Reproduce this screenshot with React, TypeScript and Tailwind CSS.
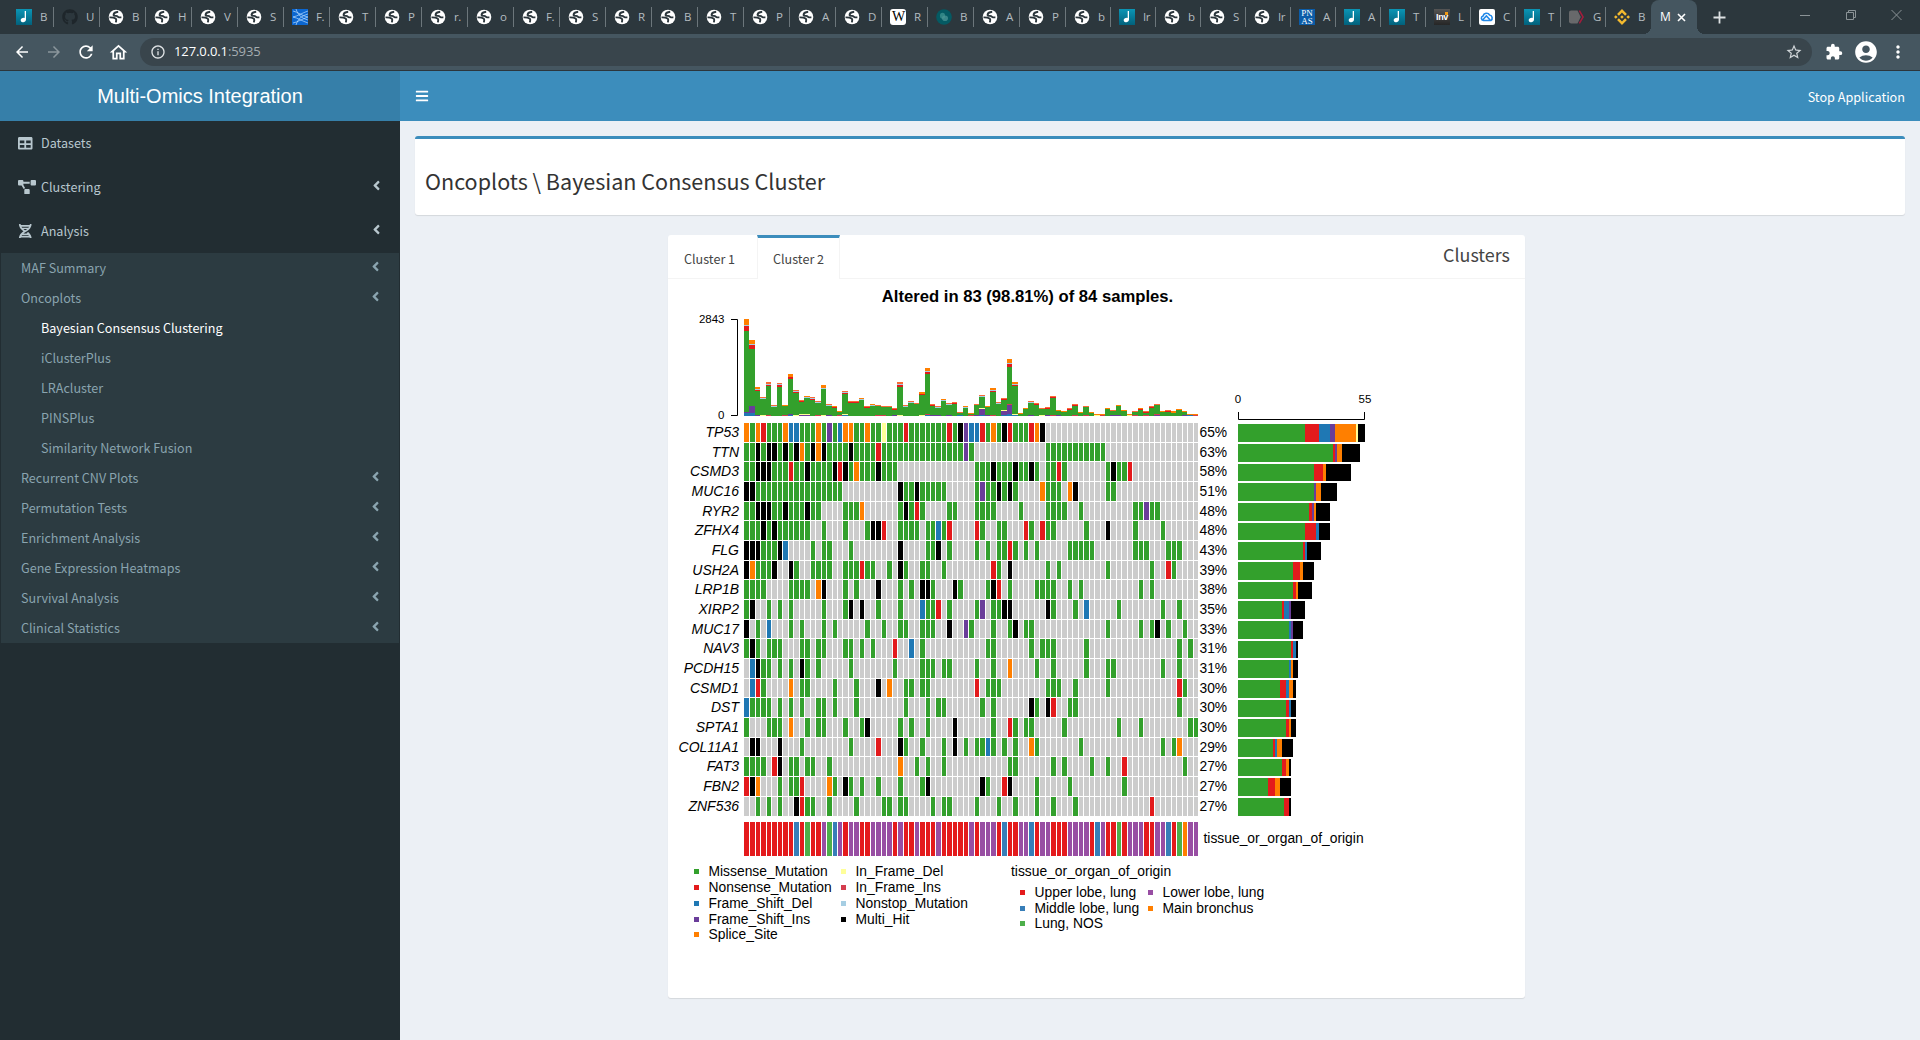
import React from "react";
import { FaAngleLeft, FaBars, FaDna, FaGithub, FaProjectDiagram, FaTable } from "react-icons/fa";
import { SiBinance } from "react-icons/si";
import {
  MdAccountCircle,
  MdArrowBack,
  MdArrowForward,
  MdExtension,
  MdInfoOutline,
  MdMoreVert,
  MdOutlineHome,
  MdRefresh,
  MdStarBorder,
} from "react-icons/md";

/* ---------- Browser tabs ---------- */

function GlobeIcon() {
  return (
    <svg width="16" height="16" viewBox="0 0 16 16">
      <circle cx="8" cy="8" r="7.3" fill="#fff" />
      <path
        d="M10.200 2.800C8.500 3 6 3.800 5.600 5.400c-.3 1.300 1 1.500 2.500 1.500 1.700 0 1.600 1.500 2.900 1.500h2.400M1.500 8.400c1.500 0 4.500-.1 6 1 1.500 1 .6 1.900.4 3.900"
        fill="none"
        stroke="#2b363c"
        strokeWidth="1.900"
      />
    </svg>
  );
}

function NoteIcon() {
  return (
    <svg width="16" height="16" viewBox="0 0 16 16">
      <defs>
        <linearGradient id="note" x1="0" y1="0" x2="0" y2="1">
          <stop offset="0" stopColor="#0b95b5" />
          <stop offset="1" stopColor="#02617c" />
        </linearGradient>
      </defs>
      <rect width="16" height="16" fill="url(#note)" />
      <ellipse cx="7.300" cy="11" rx="2.600" ry="2.200" fill="#fff" transform="rotate(-20 7.300 11)" />
      <rect x="8.700" y="2" width="1.300" height="9" fill="#fff" />
    </svg>
  );
}

function Favicon({ kind }: { kind: string }) {
  switch (kind) {
    case "note":
      return <NoteIcon />;
    case "github":
      return <FaGithub size={16} color="#1e262b" />;
    case "waves":
      return (
        <svg width="16" height="16" viewBox="0 0 16 16">
          <rect width="16" height="16" fill="#0b66d0" />
          <path
            d="M1 2c5 1 9 5 15 6M1 8c5-1 9-4 15-6M1 8c5 1 9 4 15 6M1 14c5-1 9-4 15-6M4 0c2 6 5 9 12 11M4 16c2-6 5-9 12-11"
            stroke="#b8dcff"
            strokeWidth=".7"
            fill="none"
          />
        </svg>
      );
    case "wiki":
      return (
        <span className="flex h-4 w-4 items-center justify-center rounded-[3px] bg-white font-['Liberation_Serif',serif] text-[14px] leading-4 tracking-[-1px] text-black">
          W
        </span>
      );
    case "teal":
      return (
        <svg width="16" height="16" viewBox="0 0 16 16">
          <circle cx="8" cy="8" r="7.800" fill="#045a63" />
          <ellipse cx="6.500" cy="6.800" rx="2.600" ry="3" fill="#2f8585" />
          <ellipse cx="9" cy="9.300" rx="3" ry="2.800" fill="#4b9696" fillOpacity=".75" />
        </svg>
      );
    case "pnas":
      return (
        <span className="flex h-4 w-4 flex-col items-center justify-center bg-[#0b5ca8] font-['Liberation_Serif',serif] text-[9px] leading-[8px] text-white">
          <span>PN</span>
          <span>AS</span>
        </span>
      );
    case "inv":
      return (
        <span className="relative flex h-4 w-4 items-center justify-center bg-gradient-to-b from-[#555] to-[#262626] font-['Liberation_Sans',sans-serif] text-[9px] font-bold leading-4 tracking-[-0.3px] text-white">
          Inv
          <span className="absolute right-0.5 top-[3px] h-[3px] w-[3px] bg-[#f49b14]" />
        </span>
      );
    case "cloud":
      return (
        <svg width="16" height="16" viewBox="0 0 16 16">
          <rect width="16" height="16" rx="2" fill="#fff" />
          <path
            d="M4.500 11.500a2.300 2.300 0 0 1-.5-4.500 3.600 3.600 0 0 1 6.600-1 3 3 0 0 1 1.200 5.500zM4 10.500l3.400-3.500 3.600 3.800"
            fill="none"
            stroke="#2088e8"
            strokeWidth="1.600"
          />
        </svg>
      );
    case "chevron":
      return (
        <svg width="17" height="16" viewBox="0 0 17 16">
          <path d="M0 3.500C0 2 .8 1.200 2.500 1.200H9L12.500 8 9 14.800H2.500C.8 14.800 0 14 0 12.500z" fill="#68696b" />
          <path d="M11 1.200L15 8l-4 6.800" fill="none" stroke="#a51c3c" strokeWidth="1.600" />
        </svg>
      );
    case "binance":
      return <SiBinance size={16} color="#f3ba2f" />;
    default:
      return <GlobeIcon />;
  }
}

const TABS: [string, string][] = [
  ["note", "B"], ["github", "U"], ["globe", "B"], ["globe", "H"], ["globe", "V"], ["globe", "S"],
  ["waves", "F."], ["globe", "T"], ["globe", "P"], ["globe", "r."], ["globe", "o"], ["globe", "F."],
  ["globe", "S"], ["globe", "R"], ["globe", "B"], ["globe", "T"], ["globe", "P"], ["globe", "A"],
  ["globe", "D"], ["wiki", "R"], ["teal", "B"], ["globe", "A"], ["globe", "P"], ["globe", "b"],
  ["note", "Ir"], ["globe", "b"], ["globe", "S"], ["globe", "Ir"], ["pnas", "A"], ["note", "A"],
  ["note", "T"], ["inv", "L"], ["cloud", "C"], ["note", "T"], ["chevron", "G"], ["binance", "B"],
];

function BrowserChrome() {
  return (
    <div className="h-[71px] w-full border-b border-[#2c363c] bg-[#455660] font-['Open_Sans',sans-serif]">
      <div className="flex h-[34px] w-full items-stretch bg-[#2c373d] pl-2">
        {TABS.map(([kind, title], i) => (
          <div key={i} className={`flex shrink-0 items-center pl-2 ${i < 23 ? "w-[46px]" : "w-[45px]"}`}>
            <span className="flex h-4 w-4 shrink-0 items-center justify-center">
              <Favicon kind={kind} />
            </span>
            <span className="ml-2 shrink-0 whitespace-nowrap text-[11.5px] leading-4 tracking-[-0.4px] text-[#b4bcc0]">
              {title}
            </span>
            {i < 35 && <span className="ml-auto h-5 w-px bg-[#6c767b]" />}
          </div>
        ))}
        <div className="relative flex h-[34px] w-[46px] shrink-0 items-center rounded-t-lg bg-[#455660] pl-[9px] text-[12px] text-white">
          <span className="absolute -left-2 bottom-0 h-2 w-2 bg-[radial-gradient(circle_at_0_0,transparent_8px,#455660_8px)]" />
          <span className="absolute -right-2 bottom-0 h-2 w-2 bg-[radial-gradient(circle_at_100%_0,transparent_8px,#455660_8px)]" />
          <span className="w-[11px]">M</span>
          <svg className="ml-[6px]" width="9" height="9" viewBox="0 0 9 9">
            <path d="M1 1l7 7M8 1L1 8" stroke="#fff" strokeWidth="1.600" />
          </svg>
        </div>
        <div className="flex flex-1 items-center">
          <svg className="ml-4" width="13" height="13" viewBox="0 0 13 13">
            <path d="M6.500 0.500v12M0.500 6.500h12" stroke="#dde1e3" strokeWidth="1.800" />
          </svg>
          <svg className="ml-[73px] -mt-[5px]" width="104" height="14" viewBox="0 0 104 14" fill="none" stroke="#8b9397">
            <path d="M1 7.500h10M47.500 4.500h7v7h-7zM49.500 4V2.500h7v7H55M92.500 2l10 10M102.500 2l-10 10" />
          </svg>
        </div>
      </div>
      <div className="flex h-9 items-center text-white">
        <MdArrowBack className="ml-[13px]" size={18} />
        <MdArrowForward className="ml-[14px] text-[#8b969c]" size={18} />
        <MdRefresh className="ml-[13px]" size={20} />
        <MdOutlineHome className="ml-3" size={21} />
        <div className="ml-[11px] flex h-7 w-[1672px] items-center rounded-full bg-[#39454c] pl-[10px] pr-[9px]">
          <MdInfoOutline size={16} className="text-[#dfe3e5]" />
          <span className="ml-[8px] text-[13px] tracking-[-0.1px] text-white">
            127.0.0.1<span className="text-[#a5adb1]">:5935</span>
          </span>
          <MdStarBorder size={18} className="ml-auto text-[#d0d5d8]" />
        </div>
        <MdExtension className="ml-[13px]" size={18} />
        <MdAccountCircle className="ml-[10px]" size={26} />
        <MdMoreVert className="ml-[9px]" size={20} />
      </div>
    </div>
  );
}

/* ---------- Sidebar ---------- */

const TOP_ITEMS = [
  { label: "Datasets", icon: FaTable, arrow: false },
  { label: "Clustering", icon: FaProjectDiagram, arrow: true },
  { label: "Analysis", icon: FaDna, arrow: true },
];

const SUB_ITEMS: { label: string; nested?: boolean; active?: boolean }[] = [
  { label: "MAF Summary" },
  { label: "Oncoplots" },
  { label: "Bayesian Consensus Clustering", nested: true, active: true },
  { label: "iClusterPlus", nested: true },
  { label: "LRAcluster", nested: true },
  { label: "PINSPlus", nested: true },
  { label: "Similarity Network Fusion", nested: true },
  { label: "Recurrent CNV Plots" },
  { label: "Permutation Tests" },
  { label: "Enrichment Analysis" },
  { label: "Gene Expression Heatmaps" },
  { label: "Survival Analysis" },
  { label: "Clinical Statistics" },
];

function Sidebar() {
  return (
    <aside className="w-[400px] shrink-0 bg-[#222d32] text-[12.6px] leading-5">
      {TOP_ITEMS.map(({ label, icon: Icon, arrow }) => (
        <div key={label} className="flex h-11 items-center pl-[18px] pr-5 text-[#b8c7ce]">
          <span className="flex w-[23px] shrink-0">
            <Icon size={14.5} className={label === "Clustering" ? "w-[18px]" : ""} />
          </span>
          <span>{label}</span>
          {arrow && <FaAngleLeft size={15} className="-mr-1 -mt-[3px] ml-auto" />}
        </div>
      ))}
      <div className="mx-px bg-[#2c3b41]">
        {SUB_ITEMS.map(({ label, nested, active }) => (
          <div
            key={label}
            className={`flex h-[30px] items-center pr-5 ${nested ? "pl-10" : "pl-5"} ${active ? "text-white" : "text-[#8aa4af]"}`}
          >
            <span>{label}</span>
            {!nested && <FaAngleLeft size={15} className="-mr-1 -mt-[3px] ml-auto" />}
          </div>
        ))}
      </div>
    </aside>
  );
}

/* ---------- Oncoplot data ---------- */

const MUT: Record<string, string> = {
  G: "#33a02c",
  R: "#e31a1c",
  B: "#1f78b4",
  P: "#6a3d9a",
  O: "#ff7f00",
  Y: "#ffff99",
  I: "#d53e4f",
  L: "#a6cee3",
  S: "#fb6a35",
  K: "#000000",
};

const ANNO: Record<string, string> = {
  R: "#e41a1c",
  B: "#377eb8",
  G: "#4daf4a",
  P: "#984ea3",
  O: "#ff7f00",
};

const SAMPLES = 83;

/* Each gene: name, percentage, altered samples (colour key + column or range), bar segment ends. */
const GENES: [string, string, string, string][] = [
  ["TP53", "65%", "O0 G1 O2 R3 G4-6 O7 B8-9 G10-12 O13 G14 P15 G16 B17 O18-19 G20-21 O22 G23-24 Y25 G26-28 R29 G30-36 R37 G38 K39 P40 B41-42 R43 G44 O45 G46 K47 R48 G49-51 R52 O53 K54", "G345 R387 B420 P435 O498 Y504 K525"],
  ["TTN", "63%", "G0-41 K2 K4-5 K7 K9 O10 K12 O13 K14 K19 R24 P40 G55-65", "G429 R435 P441 O456 K510"],
  ["CSMD3", "58%", "G0-27 K2-4 R8 K11 K16 R17 K18 O20 K24 G42-53 K45 K49 K52 G55-58 R57 G66-69 K67 R70", "G372 R399 O408 K483"],
  ["MUC16", "51%", "K0-1 G2-17 K28 G29-30 K31 G32-36 G42 P43 G44-45 K46 G47 K48 G49 O54 G55-57 O59 K60 G66-67", "G372 P378 O393 K441"],
  ["RYR2", "48%", "G0-13 K2-4 K7 K11 G18-20 O21 G28 K29 G30 R31 G32 G37-38 G42-45 G50 G55-58 G61 G71-75 P73", "G357 R366 P372 O378 K420"],
  ["ZFHX4", "48%", "G0-11 K3 K5 G14 G18 G22 K23-24 R25 G28-31 G33-34 B35 G36 R37 R42 G43 G46-47 R51 G52 R54 G55-56 G62 K66 G71 G76", "G345 R378 B387 K420"],
  ["FLG", "43%", "K0-2 G3-5 K6 B7 G12 G14-15 G19 K28 G33-34 K35 G37 G42 G44 G46-47 R48 G49 G51 G53 G59-63 G71-73 G77-79", "G339 R345 B351 K393"],
  ["USH2A", "39%", "K0 O1 G2-4 K5 K8 G9 G12-15 G18-20 R21 G22-23 G26 K28 G29 G32-33 G36 R45 G46 K48 G55 G57 G66 G74 R77 G78", "G309 R330 O339 K372"],
  ["LRP1B", "38%", "G0-3 G8-11 O13 K14 G18 G20 K24 G28 G30 K32-33 G34 K38 G39 G44 K45 R46 G48 G53-56 G59 G61 G72 G74", "G309 R318 O324 K366"],
  ["XIRP2", "35%", "G0 K1 G4 G6 G8 G14 G18 K19 K21 G24 G28 B32 G33-34 R35 G37 G42 P43 G45-46 K47-48 K55 G56 G60 B62 G68 G76 G79", "G276 R282 B297 P303 K345"],
  ["MUC17", "33%", "K0 G2 B4 G8 G10 G14 G16 G22 G25 G28-29 G32-34 K37 P40 G41 G45 G48 K49 G51-52 G66 G72 G74 K75 G77 G80", "G297 B303 P309 K339"],
  ["NAV3", "31%", "G0 K1 G2 G4-6 G10-11 G13-14 G18-19 G21 G23 R27 B30 G32 G44-45 G52 G54-56 G62 G79 G81", "G303 R309 B318 K324"],
  ["PCDH15", "31%", "B1 K2 G3-4 G6 G8 K10 G11 G13 G19 G27 G32-34 G36-37 G42 G45 O48 G53 G56 G62 G66-67 G76 G79", "G297 B303 O309 K324"],
  ["CSMD1", "30%", "B1 R2 G3 O8 G10-11 G16 G20 K24 O26 G29-30 G32-33 R42 G44-46 G55-57 G60 G66 R79 G80", "G270 R288 B297 O309 K318"],
  ["DST", "30%", "B0 G1-4 G6 G8 G10 G13-14 G16 G20 G29 G33 G35-36 G43 G45 K52 G53 K55 R56 G59-60 G79", "G288 R297 B303 K318"],
  ["SPTA1", "30%", "G0 G4-6 O8 G11 G13-14 G18 G21 K22 G28 G30 G33 K38 G45 R48 G49 G51-52 G58 G68 G72 G81-82", "G288 R297 O303 K318"],
  ["COL11A1", "29%", "K1-2 K6 G10 G19 R24 K28 G29 G32 G36 K38 G40 G42-43 B44 G45 G47 G49 O52 G53 G61 G76 G78 O79", "G249 R255 B261 O276 K309"],
  ["FAT3", "27%", "G0-3 R5 K6 G8-9 G11-12 G15 O28 G31 G33 G36 G48-49 G56 G58 G63 G66 R69 G80", "G276 R288 O297 K303"],
  ["FBN2", "27%", "R0 K1 O2 G6 G8-9 R10 O15 G16 K18 G19 G21 G24 G28 G32 K33 K43 G44 R47 K48 G53 G59 G69", "G234 R255 O270 K303"],
  ["ZNF536", "27%", "G2 G4 G6 K9 R10 G11-12 G15 G20 G25-26 G28-29 G34 G36-37 G42 G46 G49 G53 G56 G60 R74", "G282 R297 K303"],
];

const ORIGIN =
  "RRRRRRRRRBRGRRPGBPRPPRRPPPPRPRRPRRRPRRRRRPRPPPRBRRPPBRPPRRRPPPPRBPRRGRPPPRRPPBRGOPP";

/* Mutation burden per sample: total height, segments above and below the missense part. */
const BURDEN =
  "97:O6L1R5:P1B3 76:O4L1R4:P7B3 29:O2L1R1:P1 19:S1L1:Y1 34:S2L1R1:I1 11:S1L1: 33:S1L1R2: 11:O1:I1 42:O3R2:P1B1 26:S1L1R1:Y1 16:S1R1:Y1P1 20:O1L1:Y1P1 19:S1L1R1: 15:S1L1:I1 31:O3L1:Y1 12:S1L1:P1 10:O1R1: 5:O1:I1 25:S1L1R1:Y1B1 15:S1R1: 15:S1R1: 18:O1L1: 10:S1R1: 12:O1L1: 11:S1:I1 10:S1:I1 10:S1: 8:S1R1:P1 34:S2L1R2:Y1 11:S1L1: 15:S1L1: 13:S1: 24:O2R1:Y1 48:O3L1R2:I1B1 12:S1R1:P1 10:S1L1:P1 17:O1L1: 13:S1L1:P1 14:S1R1: 4:S1:B1 10:O1L1: 3:O1:I1 12:S1:P1 21:S1L1:Y1P6B1 10:O1:P1 28:O2L1R1:I1 14:S1L1: 18:S1R1:Y1P4B1 57:O4L1R3:I1P9B2 34:O2L1R1:Y1B1 3:O1: 8:O1: 15:S1L1:P1 13:S1R1: 8:S1:Y1 9:S1R1:P1 20:S1R1:I1 6:O1:P1 5:O1: 8:S1R1: 12:S1R1:I1 4:O1: 10:S1:I1 4:O1: 2:O1:Y1 2:O1:I1 8:O1: 6:S1:P1 11:O1:P1 6:O1: 2:O1:Y1 5:S1:I1 8:O1R1: 5:S1R1:I1 10:S1R1: 12:S1:I1P1 5:O1: 6:S1R1: 5:O2: 7:O1: 5:O1:P1 2:O1:B1 2:O1:I1";

const colX = (i: number) => Math.round(744 + 5.47 * i);
const rowY = (j: number) => Math.round(423 + 19.67 * j);

function expand(spec: string): string[] {
  const cells: string[] = Array(SAMPLES).fill("");
  for (const token of spec.split(" ")) {
    const [from, to] = token.slice(1).split("-").map(Number);
    for (let i = from; i <= (to ?? from); i++) cells[i] = token[0];
  }
  return cells;
}

function parseSegments(spec: string): [string, number][] {
  return (spec.match(/[A-Z]\d+/g) ?? []).map((s) => [s[0], Number(s.slice(1))]);
}

function BurdenBars() {
  return (
    <g>
      {BURDEN.split(" ").map((entry, i) => {
        const [total, top, bottom] = entry.split(":");
        const above = parseSegments(top);
        const below = parseSegments(bottom);
        const used = [...above, ...below].reduce((sum, [, h]) => sum + h, 0);
        const stack: [string, number][] = [...above, ["G", Math.max(0, Number(total) - used)], ...below];
        let y = 416 - Number(total);
        return stack.map(([key, h], k) => {
          const rect = (
            <rect key={`${i}-${k}`} x={colX(i)} y={y} width={colX(i + 1) - colX(i)} height={h} fill={MUT[key]} />
          );
          y += h;
          return rect;
        });
      })}
    </g>
  );
}

function GeneRow({ index }: { index: number }) {
  const [name, pct, spec, bars] = GENES[index];
  const y = rowY(index);
  const h = index === 19 ? 19 : rowY(index + 1) - y - 1;
  const barTop = Math.round(424.2 + 19.68 * index);
  const barBottom = Math.round(441.9 + 19.68 * index);
  let start = 144;
  return (
    <g>
      <text x="739" y={y + 14} textAnchor="end" fontStyle="italic" fontSize="14">
        {name}
      </text>
      {expand(spec).map((key, i) => {
        const x = i === 0 ? 744 : colX(i) + 1;
        return <rect key={i} x={x} y={y} width={colX(i + 1) - x} height={h} fill={key ? MUT[key] : "#cccccc"} />;
      })}
      <text x="1199.500" y={y + 14} fontSize="13.800">
        {pct}
      </text>
      {parseSegments(bars).map(([key, end]) => {
        const x = 1190 + start / 3;
        const w = (end - start) / 3;
        start = end;
        return <rect key={key} x={x} y={barTop} width={w} height={barBottom - barTop} fill={MUT[key]} />;
      })}
    </g>
  );
}

const LEGEND: [number, number, string, string][] = [
  [694, 871.5, MUT.G, "Missense_Mutation"],
  [694, 887.3, MUT.R, "Nonsense_Mutation"],
  [694, 903.2, MUT.B, "Frame_Shift_Del"],
  [694, 919, MUT.P, "Frame_Shift_Ins"],
  [694, 934.4, MUT.O, "Splice_Site"],
  [841, 871.5, MUT.Y, "In_Frame_Del"],
  [841, 887.3, MUT.I, "In_Frame_Ins"],
  [841, 903.2, MUT.L, "Nonstop_Mutation"],
  [841, 919, MUT.K, "Multi_Hit"],
  [1020, 892.5, ANNO.R, "Upper lobe, lung"],
  [1020, 908.3, ANNO.B, "Middle lobe, lung"],
  [1020, 923.7, ANNO.G, "Lung, NOS"],
  [1148, 892.5, ANNO.P, "Lower lobe, lung"],
  [1148, 908.3, ANNO.O, "Main bronchus"],
];

function Oncoplot() {
  return (
    <svg
      width="857"
      height="720"
      viewBox="668 279 857 720"
      className="block font-['Liberation_Sans',Arial,sans-serif]"
      fill="#000"
    >
      <text x="1027.500" y="301.500" textAnchor="middle" fontSize="16.650" fontWeight="bold">
        Altered in 83 (98.81%) of 84 samples.
      </text>
      <g fontSize="11.500">
        <text x="724.500" y="323" textAnchor="end">2843</text>
        <text x="724.500" y="419" textAnchor="end">0</text>
        <text x="1238" y="403" textAnchor="middle">0</text>
        <text x="1365" y="403" textAnchor="middle">55</text>
      </g>
      <path d="M731 319.500h6.500V415.500H731M1238.500 412v7.500h126V412" fill="none" stroke="#000" />
      <g shapeRendering="crispEdges">
        <BurdenBars />
        {GENES.map((g, j) => (
          <GeneRow key={g[0]} index={j} />
        ))}
        {ORIGIN.split("").map((key, i) => {
          const x = i === 0 ? 744 : colX(i) + 1;
          return <rect key={i} x={x} y={822} width={colX(i + 1) - x} height={34} fill={ANNO[key]} />;
        })}
      </g>
      <g fontSize="13.850">
        <text x="1203.500" y="843">tissue_or_organ_of_origin</text>
        <text x="1011" y="876">tissue_or_organ_of_origin</text>
        {LEGEND.map(([x, y, color, label]) => (
          <g key={label}>
            <rect x={x} y={Math.round(y - 2.500)} width="5" height="5" fill={color} />
            <text x={x + 14.500} y={y + 4.500}>{label}</text>
          </g>
        ))}
      </g>
    </svg>
  );
}

/* ---------- Page ---------- */

export default function App() {
  return (
    <div className="flex h-[1040px] w-[1920px] flex-col overflow-hidden bg-[#ecf0f5] font-['Noto_Sans_CJK_SC','Noto_Sans',sans-serif]">
      <BrowserChrome />
      <header className="flex h-[50px] shrink-0 text-white">
        <div className="flex w-[400px] items-center justify-center bg-[#367fa9] font-['Liberation_Sans',Arial,sans-serif] text-[20px]">
          Multi-Omics Integration
        </div>
        <div className="flex flex-1 items-center justify-between bg-[#3c8dbc] pl-[15px] pr-[15px] text-[12.65px]">
          <FaBars size={14} />
          <span>Stop Application</span>
        </div>
      </header>
      <div className="flex min-h-0 flex-1">
        <Sidebar />
        <main className="flex-1 px-[15px] pt-[15px]">
          <section className="flex h-[79px] items-center rounded-[3px] border-t-[3px] border-[#3c8dbc] bg-white pl-[10px] pt-2 text-[21.55px] text-[#333] shadow-[0_1px_1px_rgba(0,0,0,0.1)]">
            <h1>Oncoplots \ Bayesian Consensus Cluster</h1>
          </section>
          <section className="ml-[253px] mt-5 h-[763px] w-[857px] rounded-[3px] bg-white text-[#444] shadow-[0_1px_1px_rgba(0,0,0,0.1)]">
            <div className="flex h-11 items-stretch border-b border-[#f4f4f4] text-[12.6px]">
              <div className="flex w-[89px] items-center pl-4 pt-[5px]">Cluster 1</div>
              <div className="-mb-px flex w-[83px] items-center border-x border-t-[3px] border-x-[#f4f4f4] border-t-[#3c8dbc] bg-white pl-[15px] pt-px">
                Cluster 2
              </div>
              <div className="ml-auto flex items-center pb-1 pr-[15px] text-[17.9px]">Clusters</div>
            </div>
            <Oncoplot />
          </section>
        </main>
      </div>
    </div>
  );
}
